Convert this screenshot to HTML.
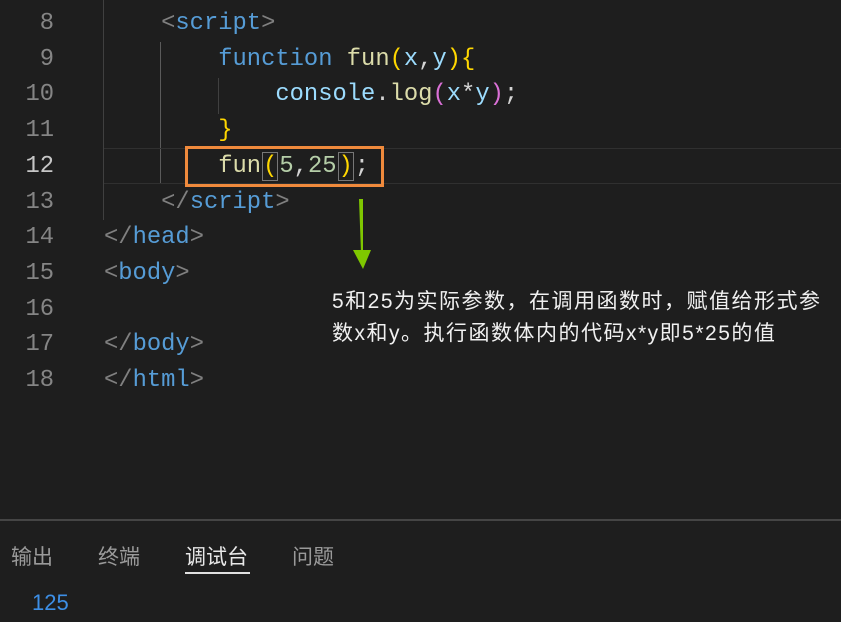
<!DOCTYPE html>
<html><head><meta charset="utf-8"><style>
body{margin:0;width:841px;height:622px;background:#1e1e1e;overflow:hidden;position:relative;font-family:"Liberation Mono",monospace}
.ln{position:absolute;left:0;width:54px;text-align:right;color:#858585;font-size:23.8px;line-height:35.7px}
.code{position:absolute;left:104px;font-size:23.8px;line-height:35.7px;white-space:pre;color:#d4d4d4}
.t{color:#808080}.tag{color:#569cd6}.kw{color:#569cd6}.fn{color:#dcdcaa}.p{color:#ffd700}.p2{color:#da70d6}.v{color:#9cdcfe}.n{color:#b5cea8}
.note{position:absolute;left:332px;color:#f0f0f0;font-family:"Liberation Sans","Noto Sans CJK SC",sans-serif;font-size:21px;letter-spacing:1.5px;white-space:nowrap}
.tab{position:absolute;top:541px;font-family:"Liberation Sans","Noto Sans CJK SC",sans-serif;font-size:21px;color:#9a9a9a;white-space:nowrap}
</style></head><body>
<div style="position:absolute;left:103px;top:0;width:1px;height:220px;background:#404040"></div>
<div style="position:absolute;left:160px;top:42px;width:1px;height:142px;background:#5a5a5a"></div>
<div style="position:absolute;left:218px;top:78px;width:1px;height:36px;background:#404040"></div>
<div style="position:absolute;left:104px;top:148px;width:737px;height:34px;border-top:1px solid #303030;border-bottom:1px solid #303030"></div>
<div class="ln" style="top:6px">8<br>9<br>10<br>11<br><span style="color:#c6c6c6">12</span><br>13<br>14<br>15<br>16<br>17<br>18</div>
<div class="code" style="top:6px"><span class="t">    &lt;</span><span class="tag">script</span><span class="t">&gt;</span>
        <span class="kw">function</span> <span class="fn">fun</span><span class="p">(</span><span class="v">x</span>,<span class="v">y</span><span class="p">){</span>
            <span class="v">console</span>.<span class="fn">log</span><span class="p2">(</span><span class="v">x</span>*<span class="v">y</span><span class="p2">)</span>;
        <span class="p">}</span>
        <span class="fn">fun</span><span class="p" style="outline:1px solid #777;margin:0 2px">(</span><span class="n">5</span>,<span class="n">25</span><span class="p" style="outline:1px solid #777;margin:0 2px">)</span>;
<span class="t">    &lt;/</span><span class="tag">script</span><span class="t">&gt;</span>
<span class="t">&lt;/</span><span class="tag">head</span><span class="t">&gt;</span>
<span class="t">&lt;</span><span class="tag">body</span><span class="t">&gt;</span>

<span class="t">&lt;/</span><span class="tag">body</span><span class="t">&gt;</span>
<span class="t">&lt;/</span><span class="tag">html</span><span class="t">&gt;</span></div>
<div style="position:absolute;left:185px;top:146px;width:193px;height:35px;border:3px solid #f08a3c"></div>
<svg style="position:absolute;left:350px;top:195px" width="25" height="80"><path d="M9 4 L13 4 L13 58 L11 58 Z" fill="#7fc700"/><polygon points="3,55 21,55 13,74" fill="#7fc700"/></svg>
<div class="note" style="top:285px">5和25为实际参数，在调用函数时，赋值给形式参</div>
<div class="note" style="top:317px">数x和y。执行函数体内的代码x*y即5*25的值</div>
<div style="position:absolute;left:0;top:519px;width:841px;height:2px;background:#454545"></div>
<div class="tab" style="left:11px">输出</div>
<div class="tab" style="left:98px">终端</div>
<div class="tab" style="left:185px;color:#e8e8e8">调试台</div>
<div class="tab" style="left:292px">问题</div>
<div style="position:absolute;left:185px;top:572px;width:65px;height:2px;background:#e0e0e0"></div>
<div style="position:absolute;left:32px;top:590px;font-size:22px;color:#3d8fe6;font-family:'Liberation Sans',sans-serif">125</div>
</body></html>
